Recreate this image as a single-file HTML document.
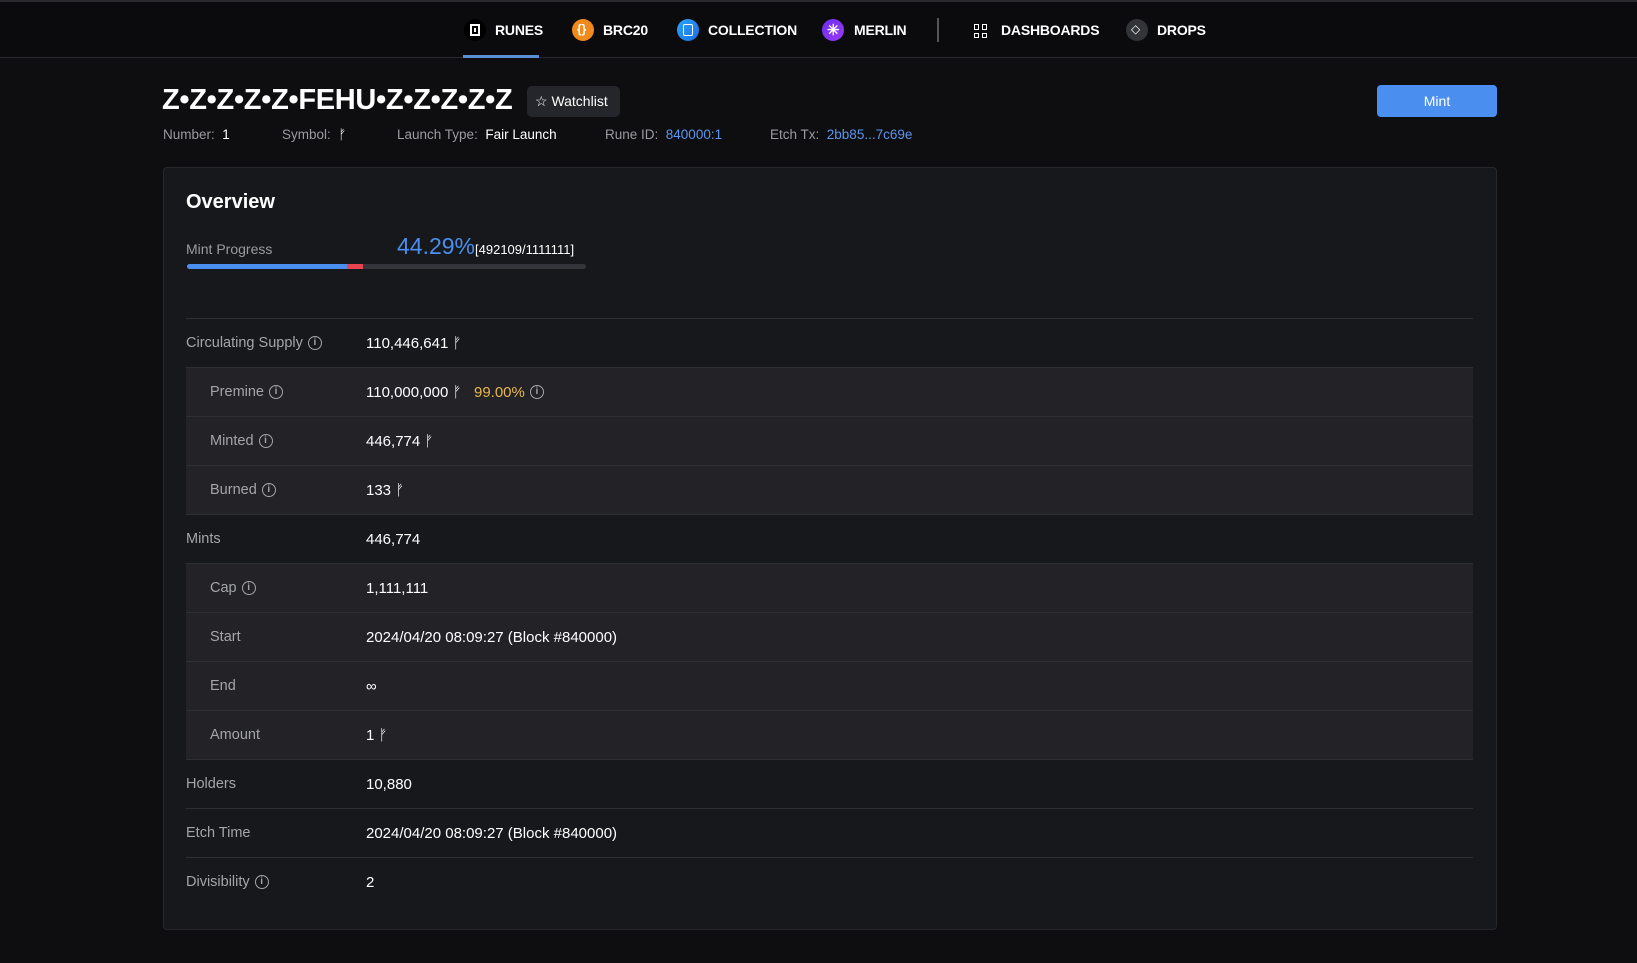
<!DOCTYPE html><html><head><meta charset="utf-8"><style>
*{margin:0;padding:0;box-sizing:border-box}
body{width:1637px;height:963px;background:#0e0e10;font-family:"Liberation Sans",sans-serif;color:#fff;position:relative;overflow:hidden}
.a{position:absolute;white-space:nowrap}
.nav{position:absolute;left:0;top:0;width:1637px;height:58px;border-top:2px solid #2a2a2e;border-bottom:1px solid #2a2a2e;background:#0b0b0d}
.ni{position:absolute;top:30px;transform:translateY(-50%);font-size:14px;font-weight:bold;letter-spacing:-0.2px}
.ic{position:absolute;top:30px;transform:translateY(-50%);width:22px;height:22px;border-radius:50%}
.lab{color:#9a9ba0;font-size:14px}
.row{position:absolute;left:186px;width:1287px;height:49px;border-bottom:1px solid #2e2f34}
.row.in{background:#222227}
.row .l{position:absolute;left:0;top:0;height:48px;display:flex;align-items:center;color:#a4a5aa;font-size:14.5px}
.row.in .l{left:24px}
.row .v{position:absolute;left:180px;top:0;height:48px;display:flex;align-items:center;font-size:15px;color:#fff;white-space:pre}
.i{display:inline-block;width:14px;height:14px;border:1.3px solid #a4a5aa;border-radius:50%;font-size:10px;line-height:11px;text-align:center;margin-left:5px;color:#a4a5aa;font-weight:bold}
</style></head><body>
<div class="nav"></div>
<div class="ic" style="left:464px;width:22px;background:#000"><div style="position:absolute;left:6px;top:5px;width:10px;height:12px;border:2px solid #fff;background:#fff;box-shadow:inset 0 0 0 2px #000"></div></div>
<div class="ni" style="left:495px">RUNES</div>
<div style="position:absolute;left:463px;top:55px;width:76px;height:3px;background:#5b8fd6"></div>
<div class="ic" style="left:572px;background:#f08a1c"><div class="a" style="left:5px;top:3px;font-size:12px;font-weight:bold">{}</div></div>
<div class="ni" style="left:603px">BRC20</div>
<div class="ic" style="left:677px;background:linear-gradient(135deg,#2aa4ff,#1a6fe0)"><div style="position:absolute;left:6px;top:5px;width:10px;height:12px;border:1.5px solid #fff;border-radius:2px"></div></div>
<div class="ni" style="left:708px">COLLECTION</div>
<div class="ic" style="left:822px;background:linear-gradient(135deg,#6a2cf0,#9a3cf5)"><div class="a" style="left:5px;top:2px;font-size:15px;font-weight:bold">✳</div></div>
<div class="ni" style="left:854px">MERLIN</div>
<div style="position:absolute;left:937px;top:18px;width:2px;height:24px;background:#555"></div>
<div class="a" style="left:974px;top:24px;width:14px;height:14px;display:grid;grid-template-columns:5px 5px;gap:3px"><i style="border:1.3px solid #fff"></i><i style="border:1.3px solid #fff"></i><i style="border:1.3px solid #fff"></i><i style="border:1.3px solid #fff"></i></div>
<div class="ni" style="left:1001px">DASHBOARDS</div>
<div class="ic" style="left:1126px;background:#333438"><div class="a" style="left:5px;top:3px;font-size:12px">◇</div></div>
<div class="ni" style="left:1157px">DROPS</div>

<div class="a" style="left:162px;top:84px;font-size:29px;font-weight:bold;letter-spacing:-0.3px">Z•Z•Z•Z•Z•FEHU•Z•Z•Z•Z•Z</div>
<div class="a" style="left:527px;top:86px;width:93px;height:31px;background:#25262b;border-radius:5px;font-size:14px;line-height:31px;padding-left:8px">☆ Watchlist</div>
<div class="a" style="left:1377px;top:85px;width:120px;height:32px;background:#4a8ff0;border-radius:4px;font-size:14px;line-height:32px;text-align:center">Mint</div>
<div class="a lab" style="left:163px;top:127px;font-size:13.5px">Number: <span style="color:#fff">&nbsp;1</span></div>
<div class="a lab" style="left:282px;top:127px;font-size:13.5px">Symbol: <span style="color:#fff">&nbsp;ᚠ</span></div>
<div class="a lab" style="left:397px;top:127px;font-size:13.5px">Launch Type: <span style="color:#fff">&nbsp;Fair Launch</span></div>
<div class="a lab" style="left:605px;top:127px;font-size:13.5px">Rune ID: <span style="color:#5b95ee">&nbsp;840000:1</span></div>
<div class="a lab" style="left:770px;top:127px;font-size:13.5px">Etch Tx: <span style="color:#5b95ee">&nbsp;2bb85...7c69e</span></div>

<div class="a" style="left:163px;top:167px;width:1334px;height:763px;background:#17181b;border:1px solid #26272b;border-radius:4px"></div>
<div class="a" style="left:186px;top:191px;font-size:20px;font-weight:bold">Overview</div>
<div class="a lab" style="left:186px;top:241px">Mint Progress</div>
<div class="a" style="left:397px;top:233px;font-size:23px;color:#4a8ff0">44.29%<span style="font-size:13px;color:#fff">[492109/1111111]</span></div>
<div class="a" style="left:187px;top:264px;width:399px;height:5px;background:#34353b;border-radius:3px;overflow:hidden"><div style="width:160px;height:5px;background:#4a8ff0"></div><div style="position:absolute;left:160px;top:0;width:16px;height:5px;background:#e84450"></div></div>
<div class="a" style="left:186px;top:318px;width:1287px;height:1px;background:#2e2f34"></div>

<div class="row" style="top:319px"><div class="l">Circulating Supply<span class="i">i</span></div><div class="v">110,446,641 ᚠ</div></div>
<div class="row in" style="top:368px"><div class="l">Premine<span class="i">i</span></div><div class="v">110,000,000 ᚠ   <span style="color:#e8b84a">99.00%</span>    <span class="i">i</span></div></div>
<div class="row in" style="top:417px"><div class="l">Minted<span class="i">i</span></div><div class="v">446,774 ᚠ</div></div>
<div class="row in" style="top:466px"><div class="l">Burned<span class="i">i</span></div><div class="v">133 ᚠ</div></div>
<div class="row" style="top:515px"><div class="l">Mints</div><div class="v">446,774</div></div>
<div class="row in" style="top:564px"><div class="l">Cap<span class="i">i</span></div><div class="v">1,111,111</div></div>
<div class="row in" style="top:613px"><div class="l">Start</div><div class="v">2024/04/20 08:09:27 (Block #840000)</div></div>
<div class="row in" style="top:662px"><div class="l">End</div><div class="v">∞</div></div>
<div class="row in" style="top:711px"><div class="l">Amount</div><div class="v">1 ᚠ</div></div>
<div class="row" style="top:760px"><div class="l">Holders</div><div class="v">10,880</div></div>
<div class="row" style="top:809px"><div class="l">Etch Time</div><div class="v">2024/04/20 08:09:27 (Block #840000)</div></div>
<div class="row" style="top:858px;border-bottom:none"><div class="l">Divisibility<span class="i">i</span></div><div class="v">2</div></div>
</body></html>
